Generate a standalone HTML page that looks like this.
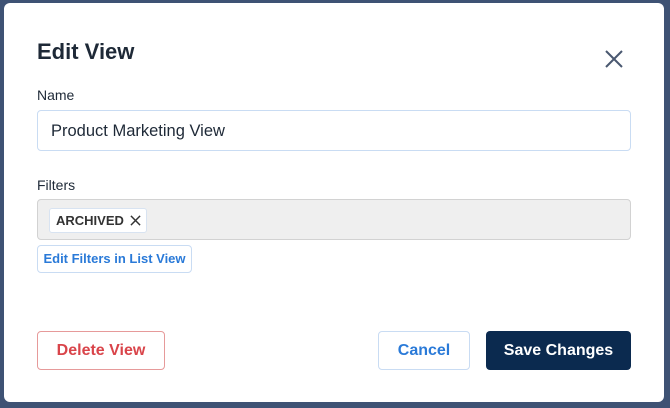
<!DOCTYPE html>
<html><head><style>
body{margin:0;width:670px;height:408px;background:#3e5274;font-family:"Liberation Sans",sans-serif;position:relative;overflow:hidden}
.m{position:absolute;left:4px;top:3px;width:660px;height:399px;background:#fff;border-radius:6px}
.a{position:absolute}
h1{position:absolute;left:33px;top:36px;margin:0;font-size:22px;font-weight:bold;color:#1e2937}
.lbl{font-size:14px;color:#1e2937}
.inp{left:33px;top:107px;width:594px;height:41px;border:1px solid #c9dcf3;border-radius:4px;box-sizing:border-box;font-size:16.5px;color:#1e2937;padding:10px 13px;line-height:20px}
.flt{left:33px;top:196px;width:594px;height:41px;background:#efefef;border:1px solid #d2d2d2;border-radius:4px;box-sizing:border-box}
.chip{left:11px;top:8px;height:25px;width:98px;background:#fff;border:1px solid #d8e3f1;border-radius:3px;box-sizing:border-box;font-size:13px;font-weight:bold;color:#333;line-height:23px;padding-left:6px}
.btn{box-sizing:border-box;border-radius:4px;text-align:center;font-weight:bold}
</style></head><body>
<div class="m">
<h1>Edit View</h1>
<svg class="a" style="left:601px;top:47px" width="18" height="18" viewBox="0 0 18 18"><path d="M1 1L17 17M17 1L1 17" stroke="#4a5870" stroke-width="2"/></svg>
<div class="a lbl" style="left:33px;top:84px">Name</div>
<div class="a inp">Product Marketing View</div>
<div class="a lbl" style="left:33px;top:174px">Filters</div>
<div class="a flt"><div class="a chip">ARCHIVED<svg style="position:absolute;left:80px;top:6px" width="11" height="11" viewBox="0 0 12 12"><path d="M1 1L11 11M11 1L1 11" stroke="#333" stroke-width="1.6"/></svg></div></div>
<div class="a btn" style="left:33px;top:242px;width:155px;height:28px;border:1px solid #c9dcf3;color:#2a7ad8;font-size:13px;line-height:26px">Edit Filters in List View</div>
<div class="a btn" style="left:33px;top:328px;width:128px;height:39px;border:1px solid #e69a9a;color:#d9444a;font-size:16px;line-height:37px">Delete View</div>
<div class="a btn" style="left:374px;top:328px;width:92px;height:39px;border:1px solid #c9dcf3;color:#2a7ad8;font-size:16px;line-height:37px">Cancel</div>
<div class="a btn" style="left:482px;top:328px;width:145px;height:39px;background:#0b2a4f;color:#fff;font-size:16px;line-height:39px">Save Changes</div>
</div>
</body></html>
